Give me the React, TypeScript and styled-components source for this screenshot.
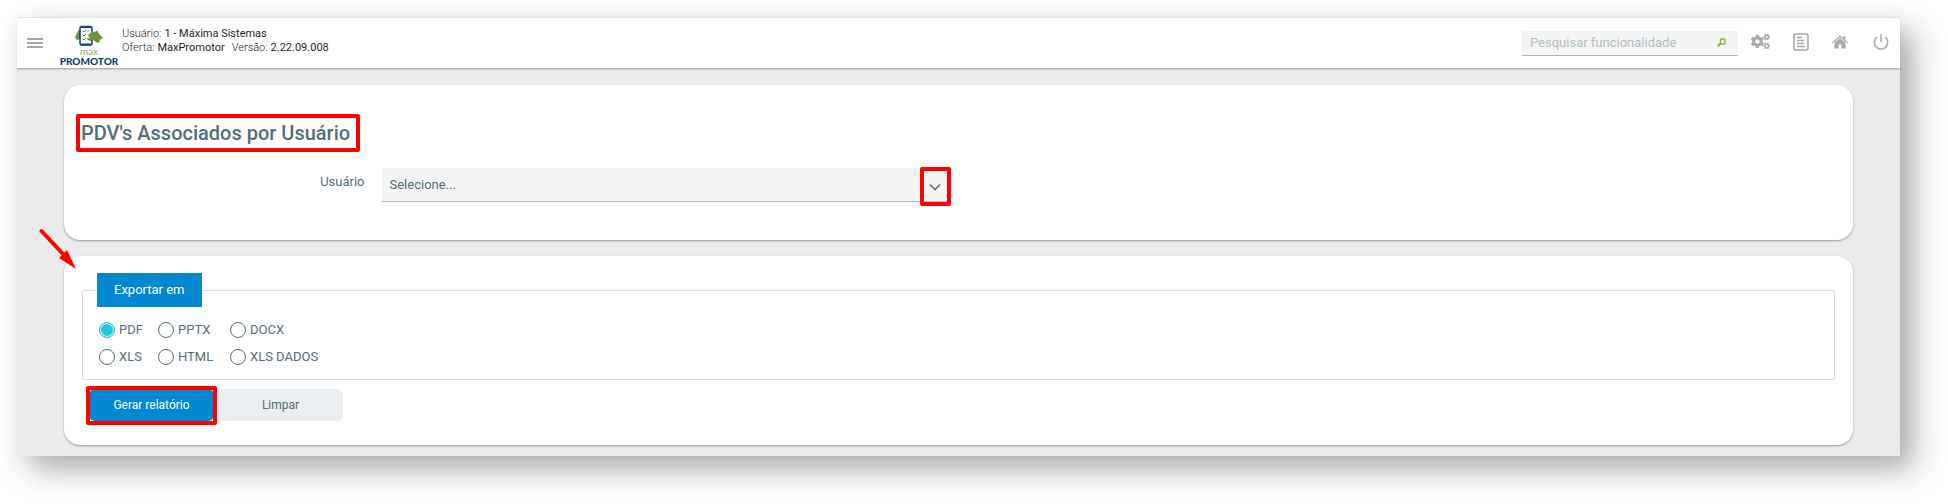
import React, { useState } from "react";
import styled, { createGlobalStyle, css } from "styled-components";
import { FaCogs } from "react-icons/fa";

const GlobalStyle = createGlobalStyle`
  *, *::before, *::after { box-sizing: border-box; }
  body {
    margin: 0;
    background: #fff;
    color: #546e7a;
    font-family: Roboto, "Liberation Sans", sans-serif;
    font-size: 13px;
    line-height: 16px;
  }
  button, input, select { font: inherit; color: inherit; }
`;

const Frame = styled.div`
  margin: 17px 48px 48px 17px;
  background: #ebebeb;
  box-shadow: 14px 14px 30px rgba(0, 0, 0, 0.31), 2px 4px 20px rgba(0, 0, 0, 0.05);
`;

const TopBar = styled.header`
  display: flex;
  align-items: center;
  height: 52px;
  padding: 0 9px 0 10px;
  background: #fff;
  border-top: 1px solid #e3e3e3;
  border-bottom: 1px solid #b4b4b4;
  box-shadow: 0 1px 1px rgba(0, 0, 0, 0.12);
`;

const IconButton = styled.button<{ $width: number }>`
  display: flex;
  align-items: center;
  justify-content: center;
  width: ${(p) => p.$width}px;
  height: 20px;
  padding: 0;
  border: 0;
  background: none;
  color: #a8a8a8;
  cursor: pointer;
`;

const Brand = styled.a`
  display: flex;
  flex-direction: column;
  align-items: center;
  width: 60px;
  padding-top: 4px;
  margin-left: 16px;
  color: #123f6d;
  text-decoration: none;
`;

const BrandMax = styled.span`
  color: #8fa765;
  font: 400 10px/9px Lato, sans-serif;
`;

const BrandName = styled.span`
  font: 900 10px/10px Lato, sans-serif;
`;

const Session = styled.div`
  margin: 0 auto 5px 3px;
  color: #1f1f1f;
  font-size: 11px;
  line-height: 14px;
`;

const SessionLine = styled.div`
  display: flex;
  gap: 7px;
`;

const Caption = styled.span`
  margin-right: 3px;
  font-weight: 300;
`;

const Search = styled.label`
  display: flex;
  align-items: center;
  width: 216px;
  height: 25px;
  margin: 0 12px 0 0;
  padding: 0 12px 0 8px;
  background: #f4f4f4;
  border-bottom: 1px solid #a5bcc6;
`;

const SearchInput = styled.input`
  flex: 1;
  min-width: 0;
  padding: 0;
  border: 0;
  outline: 0;
  background: none;
  &::placeholder { color: #b0bec5; opacity: 1; }
`;

const Tools = styled.nav`
  display: flex;
  align-items: center;
  gap: 23px;
  padding-bottom: 3px;
`;

const Content = styled.main`
  display: flex;
  flex-direction: column;
  gap: 16px;
  padding: 16px 47px 11px;
`;

const Card = styled.section<{ $padding: string }>`
  padding: ${(p) => p.$padding};
  background: #fff;
  border-radius: 16px;
  box-shadow: 0 1px 2px rgba(60, 72, 96, 0.5);
`;

const outline = css`
  content: "";
  position: absolute;
  border: 4px solid #f00;
  border-radius: 2px;
  pointer-events: none;
`;

const Title = styled.h1`
  position: relative;
  width: fit-content;
  margin: 0 0 23px;
  font-size: 20px;
  font-weight: 500;
  line-height: 24px;
  &::after { ${outline} inset: -7px -10px -7px -5px; }
`;

const FormRow = styled.div`
  display: grid;
  grid-template-columns: 1fr 2fr 3fr;
`;

const FieldLabel = styled.label`
  padding: 6px 9px 0 0;
  text-align: right;
`;

const SelectBox = styled.div`
  position: relative;
  margin: 0 8px;
  &::after { ${outline} inset: -1px 0 -4px auto; width: 31px; }
  svg { position: absolute; right: 10px; top: 15px; pointer-events: none; }
`;

const Select = styled.select`
  display: block;
  width: 100%;
  height: 34px;
  padding: 0 32px 0 8px;
  appearance: none;
  background: #f4f4f4;
  border: 0;
  border-bottom: 1px solid #b0bec5;
  border-radius: 0;
  outline: 0;
`;

const Fieldset = styled.fieldset`
  min-width: 0;
  margin: 0;
  padding: 15px 14px 14px;
  border: 1px solid #dcdcdc;
  border-radius: 2px;
`;

const Legend = styled.legend`
  padding: 0 17px;
  background: #0288d1;
  border-radius: 1px;
  color: #fff;
  line-height: 34px;
`;

const Options = styled.div`
  display: grid;
  grid-template-columns: 59px 72px auto;
  row-gap: 11px;
  justify-content: start;
  padding-left: 2px;
`;

const Option = styled.label`
  display: flex;
  align-items: center;
  gap: 4px;
  white-space: nowrap;
`;

const Radio = styled.input`
  width: 16px;
  height: 16px;
  margin: 0;
  appearance: none;
  border: 1px solid #546e7a;
  border-radius: 50%;
  &:checked {
    border-color: #26c6da;
    background: #26c6da;
    box-shadow: inset 0 0 0 1px #d4f4f8;
  }
`;

const Actions = styled.div`
  display: flex;
  gap: 4px;
  padding: 9px 7px 0;
`;

const Action = styled.button<{ $primary?: boolean }>`
  position: relative;
  width: 125px;
  height: 32px;
  padding: 0;
  border: 0;
  border-radius: 6px;
  background: ${(p) => (p.$primary ? "#0288d1" : "#eaeef1")};
  color: ${(p) => (p.$primary ? "#fff" : "#546e7a")};
  font-size: 12px;
  cursor: pointer;
  ${(p) => p.$primary && css`&::after { ${outline} inset: -3px -3px -4px; }`}
`;

const ExportCard = styled(Card)`
  position: relative;
`;

const Pointer = styled.svg`
  position: absolute;
  left: -25px;
  top: -28px;
  pointer-events: none;
`;

const LogoMark = () => (
  <svg width="28" height="22" viewBox="0 0 28 22" aria-hidden="true">
    <path d="M5 4L3 6L0 12L2 15L5 14Z" fill="#70913f" />
    <rect x="5" y="1.500" width="12" height="18.500" rx="2" fill="#fff" stroke="#164873" strokeWidth="1.600" />
    <path d="M6 2H16M6 19.500H16" stroke="#164873" strokeWidth="2" />
    <path d="M8 6l1 1 2-2M8 10l1 1 2-2M8 14l1 1 2-2" fill="none" stroke="#4f7a52" />
    <path d="M12 6h2M12 14h2" stroke="#70913f" />
    <path d="M14 9L17 6.500L20 7L22 5.500L25 10L28 13L25 15L24 18L21 17L18 15L15 16L12 14L15 12.500L13 11Z" fill="#70913f" />
  </svg>
);

const formats = ["PDF", "PPTX", "DOCX", "XLS", "HTML", "XLS DADOS"];

export default function App() {
  const [format, setFormat] = useState("PDF");
  return (
    <>
      <GlobalStyle />
      <Frame>
        <TopBar>
          <IconButton $width={16} aria-label="Menu">
            <svg width="16" height="10" aria-hidden="true">
              <path d="M0 1h16M0 5h16M0 9h16" stroke="currentColor" strokeWidth="2" />
            </svg>
          </IconButton>
          <Brand href="#">
            <LogoMark />
            <BrandMax>max</BrandMax>
            <BrandName>PROMOTOR</BrandName>
          </Brand>
          <Session>
            <SessionLine>
              <span><Caption>Usuário:</Caption>1 - Máxima Sistemas</span>
            </SessionLine>
            <SessionLine>
              <span><Caption>Oferta:</Caption>MaxPromotor</span>
              <span><Caption>Versão:</Caption>2.22.09.008</span>
            </SessionLine>
          </Session>
          <Search>
            <SearchInput type="text" aria-label="Pesquisar funcionalidade" placeholder="Pesquisar funcionalidade" />
            <svg width="9" height="9" viewBox="0 0 9 9" fill="none" stroke="#7cb82f" aria-hidden="true">
              <path d="M4 1h3.500l.500.500v3.500l-1 1H4l-.500-.500V2z" strokeWidth="1.300" />
              <path d="M3.500 5.500L.800 8.200" strokeWidth="2" />
            </svg>
          </Search>
          <Tools>
            <IconButton $width={20} aria-label="Configurações"><FaCogs size={19} /></IconButton>
            <IconButton $width={16} aria-label="Relatórios">
              <svg width="16" height="18" viewBox="0 0 16 18" fill="none" stroke="currentColor" aria-hidden="true">
                <rect x="1" y="1" width="14" height="16" rx="2" strokeWidth="1.600" />
                <path d="M4 4.500h5M4 7.500h7M4 10.500h7M4 13.500h8" strokeWidth="1.300" />
              </svg>
            </IconButton>
            <IconButton $width={16} aria-label="Início">
              <svg width="16" height="14" viewBox="0 0 16 14" fill="currentColor" aria-hidden="true">
                <path d="M8 3.200L2.500 7.800V13q0 .6.600.6H6.600V9.500h2.800v4.100h3.500q.6 0 .6-.6V7.800z" />
                <path d="M8 .500L11.200 3.200V1.200h2.200v3.900L16 7.300l-.8 1L8 2.200.8 8.300 0 7.300z" />
              </svg>
            </IconButton>
            <IconButton $width={20} aria-label="Sair">
              <svg width="16" height="18" viewBox="0 0 16 18" fill="none" stroke="currentColor" strokeWidth="1.500" aria-hidden="true">
                <path d="M8 1v8M4 4A6.700 6.700 0 1 0 12 4" />
              </svg>
            </IconButton>
          </Tools>
        </TopBar>
        <Content>
          <Card $padding="36px 17px 38px">
            <Title>PDV's Associados por Usuário</Title>
            <FormRow>
              <FieldLabel htmlFor="usuario">Usuário</FieldLabel>
              <SelectBox>
                <Select id="usuario" defaultValue=""><option value="">Selecione...</option></Select>
                <svg width="12" height="8" viewBox="0 0 12 8" fill="none" stroke="#546e7a" strokeWidth="1.600" aria-hidden="true">
                  <path d="M1 1.500l5 5 5-5" />
                </svg>
              </SelectBox>
            </FormRow>
          </Card>
          <ExportCard $padding="17px 18px 24px">
            <Fieldset>
              <Legend>Exportar em</Legend>
              <Options>
                {formats.map((name) => (
                  <Option key={name}>
                    <Radio type="radio" name="formato" checked={format === name} onChange={() => setFormat(name)} />
                    {name}
                  </Option>
                ))}
              </Options>
            </Fieldset>
            <Actions>
              <Action type="button" $primary>Gerar relatório</Action>
              <Action type="button" onClick={() => setFormat("PDF")}>Limpar</Action>
            </Actions>
            <Pointer width="38" height="42" viewBox="0 0 38 42" aria-hidden="true">
              <path d="M2.500 3L26 28" stroke="#f00" strokeWidth="4" strokeLinecap="round" />
              <path d="M37 41L20 30L28 22Z" fill="#f00" />
            </Pointer>
          </ExportCard>
        </Content>
      </Frame>
    </>
  );
}
